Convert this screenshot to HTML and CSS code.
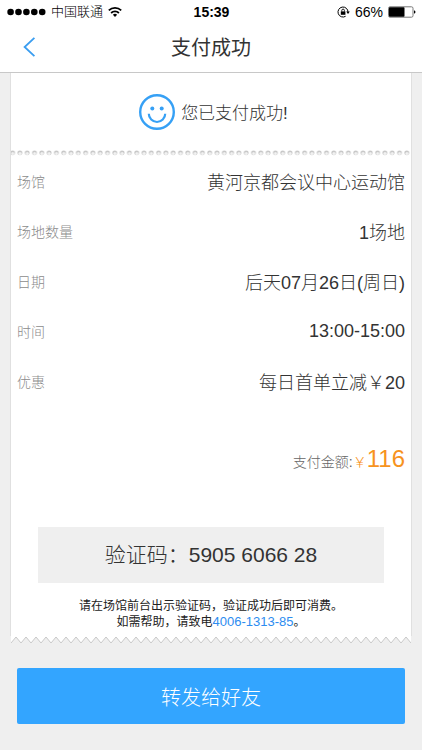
FILE: index.html
```html
<!DOCTYPE html>
<html lang="zh-CN">
<head>
  <meta charset="UTF-8">
  <meta name="viewport" content="width=device-width, initial-scale=1.0">
  <title>支付成功</title>
  <link rel="stylesheet" href="styles.css">
</head>
<body>

<header class="header">
  <div class="status-bar">
    <div class="status-left">
      <svg class="signal" width="39" height="8" viewBox="0 0 39 8">
        <circle cx="3.6" cy="4" r="3.3"/>
        <circle cx="11.5" cy="4" r="3.3"/>
        <circle cx="19.4" cy="4" r="3.3"/>
        <circle cx="27.3" cy="4" r="3.3"/>
        <circle cx="35.2" cy="4" r="3.3"/>
      </svg>
      <span class="carrier">中国联通</span>
      <svg class="wifi" width="14" height="12" viewBox="0 0 14 12" fill="none" stroke="#000" stroke-width="1.8">
        <path d="M0.8 4.4a9 9 0 0 1 12.4 0"/>
        <path d="M3.1 7a5.6 5.6 0 0 1 7.8 0"/>
        <path d="M7 11L4.9 8.8a3 3 0 0 1 4.2 0z" fill="#000" stroke="none"/>
      </svg>
    </div>
    <span class="time">15:39</span>
    <div class="status-right">
      <svg width="13" height="12" viewBox="0 0 13 12" fill="none" stroke="#000">
        <path d="M11 6.2A5 5 0 1 0 8.6 10.3"/>
        <path d="M9.2 5.6h3.6L11 8z" fill="#000" stroke="none"/>
        <rect x="3.8" y="5.4" width="4.6" height="3.4" fill="#000" stroke="none"/>
        <path d="M4.8 5.6V4.4a1.3 1.3 0 0 1 2.6 0v1.2" stroke-width="0.9"/>
      </svg>
      <span>66%</span>
      <svg width="28" height="12" viewBox="0 0 28 12">
        <rect x="0.5" y="0.8" width="24.5" height="10.4" rx="1.5" fill="none" stroke="#777"/>
        <rect x="1" y="1.3" width="15.5" height="9.4" rx="0.8"/>
        <path d="M26 4.2c2 0.6 2 3 0 3.6z"/>
      </svg>
    </div>
  </div>
  <nav class="nav">
    <a class="back" href="#" aria-label="返回">
      <svg width="13" height="20" viewBox="0 0 13 20" fill="none" stroke="#3a9df0" stroke-width="1.8">
        <path d="M11.4 0.8L1.6 10l9.8 9.2"/>
      </svg>
    </a>
    <h1>支付成功</h1>
  </nav>
</header>

<main>
  <section class="ticket">
    <div class="result">
      <svg width="36" height="38" viewBox="0 0 36 38" fill="none" stroke="#36a0f5">
        <circle cx="18" cy="19" r="16.8" stroke-width="2.4"/>
        <path d="M9.8 20.8a8.2 8.2 0 0 0 16.4 0" stroke-width="2.2"/>
        <circle cx="13.3" cy="15.6" r="2" fill="#36a0f5" stroke="none"/>
        <circle cx="22.7" cy="15.6" r="2" fill="#36a0f5" stroke="none"/>
      </svg>
      <span>您已支付成功!</span>
    </div>

    <svg class="perforation" width="100%" height="6">
      <defs>
        <pattern id="hole" width="7.3" height="6" patternUnits="userSpaceOnUse" patternTransform="translate(-2 0)">
          <circle cx="3.6" cy="2.8" r="2.4" fill="#c8c8c8"/>
          <circle cx="3.7" cy="3.4" r="1.5" fill="#f2f2f2"/>
        </pattern>
      </defs>
      <rect width="100%" height="6" fill="url(#hole)"/>
    </svg>

    <dl class="details">
      <div><dt>场馆</dt><dd>黄河京都会议中心运动馆</dd></div>
      <div><dt>场地数量</dt><dd>1场地</dd></div>
      <div><dt>日期</dt><dd>后天07月26日(周日)</dd></div>
      <div><dt>时间</dt><dd>13:00-15:00</dd></div>
      <div><dt>优惠</dt><dd>每日首单立减￥20</dd></div>
    </dl>

    <p class="total">支付金额:<span class="yen">￥</span><span class="amount">116</span></p>

    <div class="code">验证码：<span>5905 6066 28</span></div>

    <p class="hint">请在场馆前台出示验证码，验证成功后即可消费。<br>如需帮助，请致电<a href="tel:4006-1313-85">4006-1313-85</a>。</p>
  </section>

  <svg class="zigzag" width="100%" height="8">
    <defs>
      <pattern id="tooth" width="10" height="8" patternUnits="userSpaceOnUse">
        <path d="M0 0v7l5-6 5 6V0z" fill="#fff"/>
        <path d="M0 7l5-6 5 6" fill="none" stroke="#c8c8c8"/>
      </pattern>
    </defs>
    <rect width="100%" height="8" fill="url(#tooth)"/>
  </svg>

  <button class="share" type="button">转发给好友</button>
</main>

</body>
</html>
```

FILE: styles.css
```css
body {
  margin: 0;
  background-color: #efefef;
  color: #333;
  font-family: "Liberation Sans", "Noto Sans CJK SC", sans-serif;
  font-weight: 300;
}

.header {
  background-color: #fff;
  border-bottom: 1px solid #c8c8c8;
}

.status-bar {
  display: grid;
  grid-template-columns: 1fr auto 1fr;
  align-items: center;
  height: 24px;
  padding: 0 6px 0 7px;
  color: #000;
  font-size: 14px;
}

.status-left,
.status-right {
  display: flex;
  align-items: center;
  gap: 5px;
}

.status-left {
  font-size: 13px;
  line-height: 16px;
}

.status-right {
  justify-content: flex-end;
}

.time {
  font-weight: bold;
}

.nav {
  display: grid;
  grid-template-columns: 60px 1fr 60px;
  align-items: center;
  height: 45px;
  padding-bottom: 3px;
}

.back {
  display: flex;
  padding-left: 23px;
}

h1 {
  margin: 0;
  font-size: 20px;
  font-weight: normal;
  text-align: center;
}

.ticket {
  margin: 0 10px;
  background-color: #fff;
  border: solid #e0e0e0;
  border-width: 0 1px;
}

.result {
  display: flex;
  justify-content: center;
  align-items: center;
  gap: 6px;
  height: 77px;
  padding-left: 5px;
  color: #333;
  font-size: 17px;
}

.perforation,
.zigzag {
  display: block;
}

.details {
  margin: 0;
  padding: 0 6px;
}

.details div {
  display: flex;
  justify-content: space-between;
  align-items: center;
  height: 50px;
}

dt {
  color: #8c8c8c;
  font-size: 14px;
}

dd {
  margin: 0;
  font-size: 18px;
}

.total {
  margin: 35px 6px 0;
  color: #666;
  font-size: 14px;
  line-height: 36px;
  text-align: right;
}

.total span {
  color: #f7931e;
}

.total .amount {
  font-size: 24px;
}

.code {
  margin: 47px 27px 0;
  background-color: #efefef;
  font-size: 21px;
  line-height: 56px;
  text-align: center;
}

.hint {
  margin: 0;
  padding: 16px 0 6px;
  color: #222;
  font-size: 12px;
  font-weight: 400;
  line-height: 15px;
  text-align: center;
}

.hint a {
  color: #2d8cf0;
  font-size: 13px;
  text-decoration: none;
}

.zigzag {
  box-sizing: border-box;
  padding: 0 11px;
}

.share {
  display: block;
  width: calc(100% - 34px);
  height: 56px;
  margin: 24px 17px 26px;
  border: none;
  border-radius: 2px;
  background-color: #33a5ff;
  color: #fff;
  font: inherit;
  font-size: 20px;
  cursor: pointer;
}
```
